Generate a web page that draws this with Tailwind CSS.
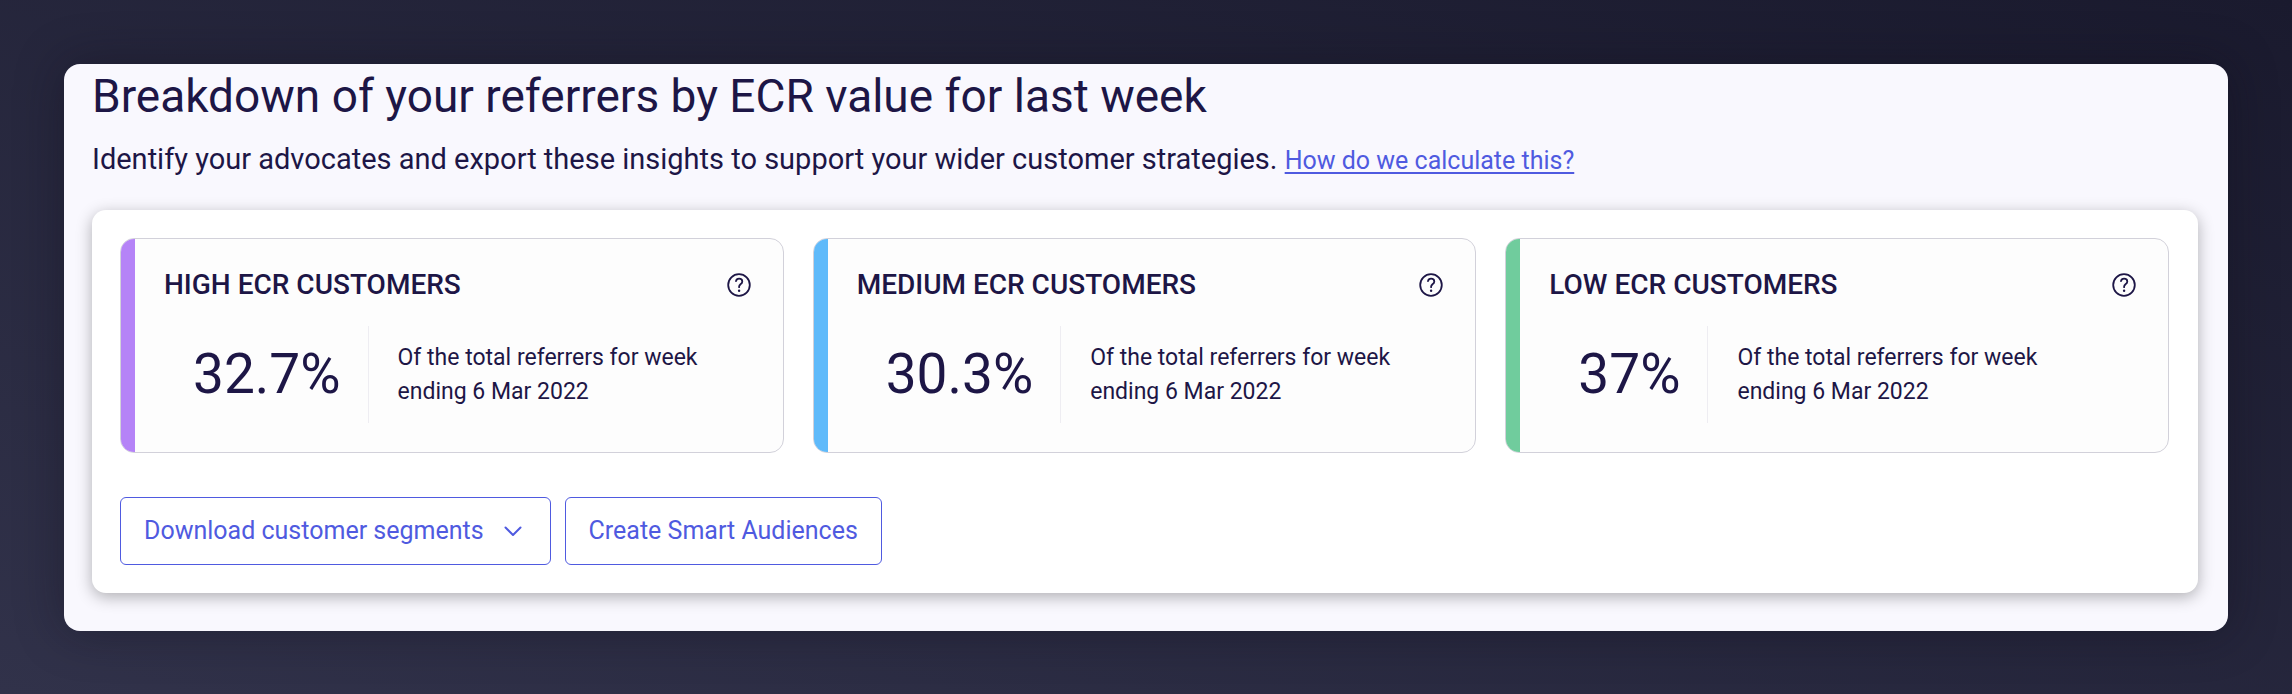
<!DOCTYPE html>
<html lang="en">
<head>
    <meta charset="UTF-8">
    <title>Referrers by ECR value</title>
    <script src="https://cdn.jsdelivr.net/npm/@tailwindcss/browser@4"></script>
</head>
<body class="min-h-screen bg-linear-to-tr from-[#31324a] to-[#1a1a2e] p-16 font-[Roboto,sans-serif] text-[#1d1646]">
    <main class="rounded-2xl bg-[#f9f8fe] pt-[2px] pr-[30px] pb-[38px] pl-7 shadow-[0_0_48px_rgba(15,12,25,0.4)]">
        <h1 class="text-[46px] leading-[60px]">Breakdown of your referrers by ECR value for last week</h1>
        <p class="mt-4 text-[29px] leading-[35px]">
            Identify your advocates and export these insights to support your wider customer strategies.
            <a href="#" class="text-[25px] text-[#4f5ae0] underline decoration-2 underline-offset-3">How do we calculate this?</a>
        </p>

        <section class="mt-8 rounded-[14px] bg-white py-7 pr-[29px] pl-7 shadow-[0_4px_16px_rgba(0,0,0,0.3)]">
            <div class="grid grid-cols-3 gap-[29px]">
                <!-- High -->
                <article class="flex overflow-hidden rounded-[14px] border border-[#d2d1da] bg-[#fdfdfd]">
                    <div class="w-[14px] shrink-0 bg-[#b583f7]"></div>
                    <div class="grow py-[29px] pr-8 pl-[29px]">
                        <div class="flex items-center justify-between">
                            <h2 class="text-[28px] leading-[34px] font-medium">HIGH ECR CUSTOMERS</h2>
                            <button type="button" aria-label="About high ECR customers">
                                <svg class="size-6" viewBox="0 0 24 24" fill="none" stroke="currentColor" stroke-width="1.8" stroke-linecap="round">
                                    <circle cx="12" cy="12" r="10.8"/>
                                    <path d="M9 8.2c.3-1.6 1.5-2.5 3.1-2.5 1.9 0 3.2 1.1 3.2 2.8 0 1.4-.8 2.1-1.8 2.8-1 .8-1.4 1.3-1.4 2.5v.4"/>
                                    <circle cx="12.1" cy="17.8" r="1.2" fill="currentColor" stroke="none"/>
                                </svg>
                            </button>
                        </div>
                        <div class="mt-6 flex h-[97px] items-center">
                            <div class="flex h-full items-center border-r border-[#eeedf2] pr-[27px] pl-[29px] text-[55px]">32.7%</div>
                            <p class="pl-[29px] text-[23px] leading-[34px]">Of the total referrers for week<br>ending 6 Mar 2022</p>
                        </div>
                    </div>
                </article>

                <!-- Medium -->
                <article class="flex overflow-hidden rounded-[14px] border border-[#d2d1da] bg-[#fdfdfd]">
                    <div class="w-[14px] shrink-0 bg-[#5fbafa]"></div>
                    <div class="grow py-[29px] pr-8 pl-[29px]">
                        <div class="flex items-center justify-between">
                            <h2 class="text-[28px] leading-[34px] font-medium">MEDIUM ECR CUSTOMERS</h2>
                            <button type="button" aria-label="About medium ECR customers">
                                <svg class="size-6" viewBox="0 0 24 24" fill="none" stroke="currentColor" stroke-width="1.8" stroke-linecap="round">
                                    <circle cx="12" cy="12" r="10.8"/>
                                    <path d="M9 8.2c.3-1.6 1.5-2.5 3.1-2.5 1.9 0 3.2 1.1 3.2 2.8 0 1.4-.8 2.1-1.8 2.8-1 .8-1.4 1.3-1.4 2.5v.4"/>
                                    <circle cx="12.1" cy="17.8" r="1.2" fill="currentColor" stroke="none"/>
                                </svg>
                            </button>
                        </div>
                        <div class="mt-6 flex h-[97px] items-center">
                            <div class="flex h-full items-center border-r border-[#eeedf2] pr-[27px] pl-[29px] text-[55px]">30.3%</div>
                            <p class="pl-[29px] text-[23px] leading-[34px]">Of the total referrers for week<br>ending 6 Mar 2022</p>
                        </div>
                    </div>
                </article>

                <!-- Low -->
                <article class="flex overflow-hidden rounded-[14px] border border-[#d2d1da] bg-[#fdfdfd]">
                    <div class="w-[14px] shrink-0 bg-[#70cc9d]"></div>
                    <div class="grow py-[29px] pr-8 pl-[29px]">
                        <div class="flex items-center justify-between">
                            <h2 class="text-[28px] leading-[34px] font-medium">LOW ECR CUSTOMERS</h2>
                            <button type="button" aria-label="About low ECR customers">
                                <svg class="size-6" viewBox="0 0 24 24" fill="none" stroke="currentColor" stroke-width="1.8" stroke-linecap="round">
                                    <circle cx="12" cy="12" r="10.8"/>
                                    <path d="M9 8.2c.3-1.6 1.5-2.5 3.1-2.5 1.9 0 3.2 1.1 3.2 2.8 0 1.4-.8 2.1-1.8 2.8-1 .8-1.4 1.3-1.4 2.5v.4"/>
                                    <circle cx="12.1" cy="17.8" r="1.2" fill="currentColor" stroke="none"/>
                                </svg>
                            </button>
                        </div>
                        <div class="mt-6 flex h-[97px] items-center">
                            <div class="flex h-full items-center border-r border-[#eeedf2] pr-[27px] pl-[29px] text-[55px]">37%</div>
                            <p class="pl-[29px] text-[23px] leading-[34px]">Of the total referrers for week<br>ending 6 Mar 2022</p>
                        </div>
                    </div>
                </article>
            </div>

            <div class="mt-11 flex gap-[14px] text-[25px] leading-[36px] text-[#4f5ae0]">
                <button type="button" class="flex items-center gap-5 rounded-md border border-[#4f5ae0] py-[15px] pr-7 pl-[23px]">
                    Download customer segments
                    <svg class="w-[18px]" viewBox="0 0 18 11" fill="none" stroke="currentColor" stroke-width="2" stroke-linecap="round" stroke-linejoin="round">
                        <path d="M1.5 1.5 9 9l7.5-7.5"/>
                    </svg>
                </button>
                <button type="button" class="rounded-md border border-[#4f5ae0] px-[23px] py-[15px]">Create Smart Audiences</button>
            </div>
        </section>
    </main>
</body>
</html>
